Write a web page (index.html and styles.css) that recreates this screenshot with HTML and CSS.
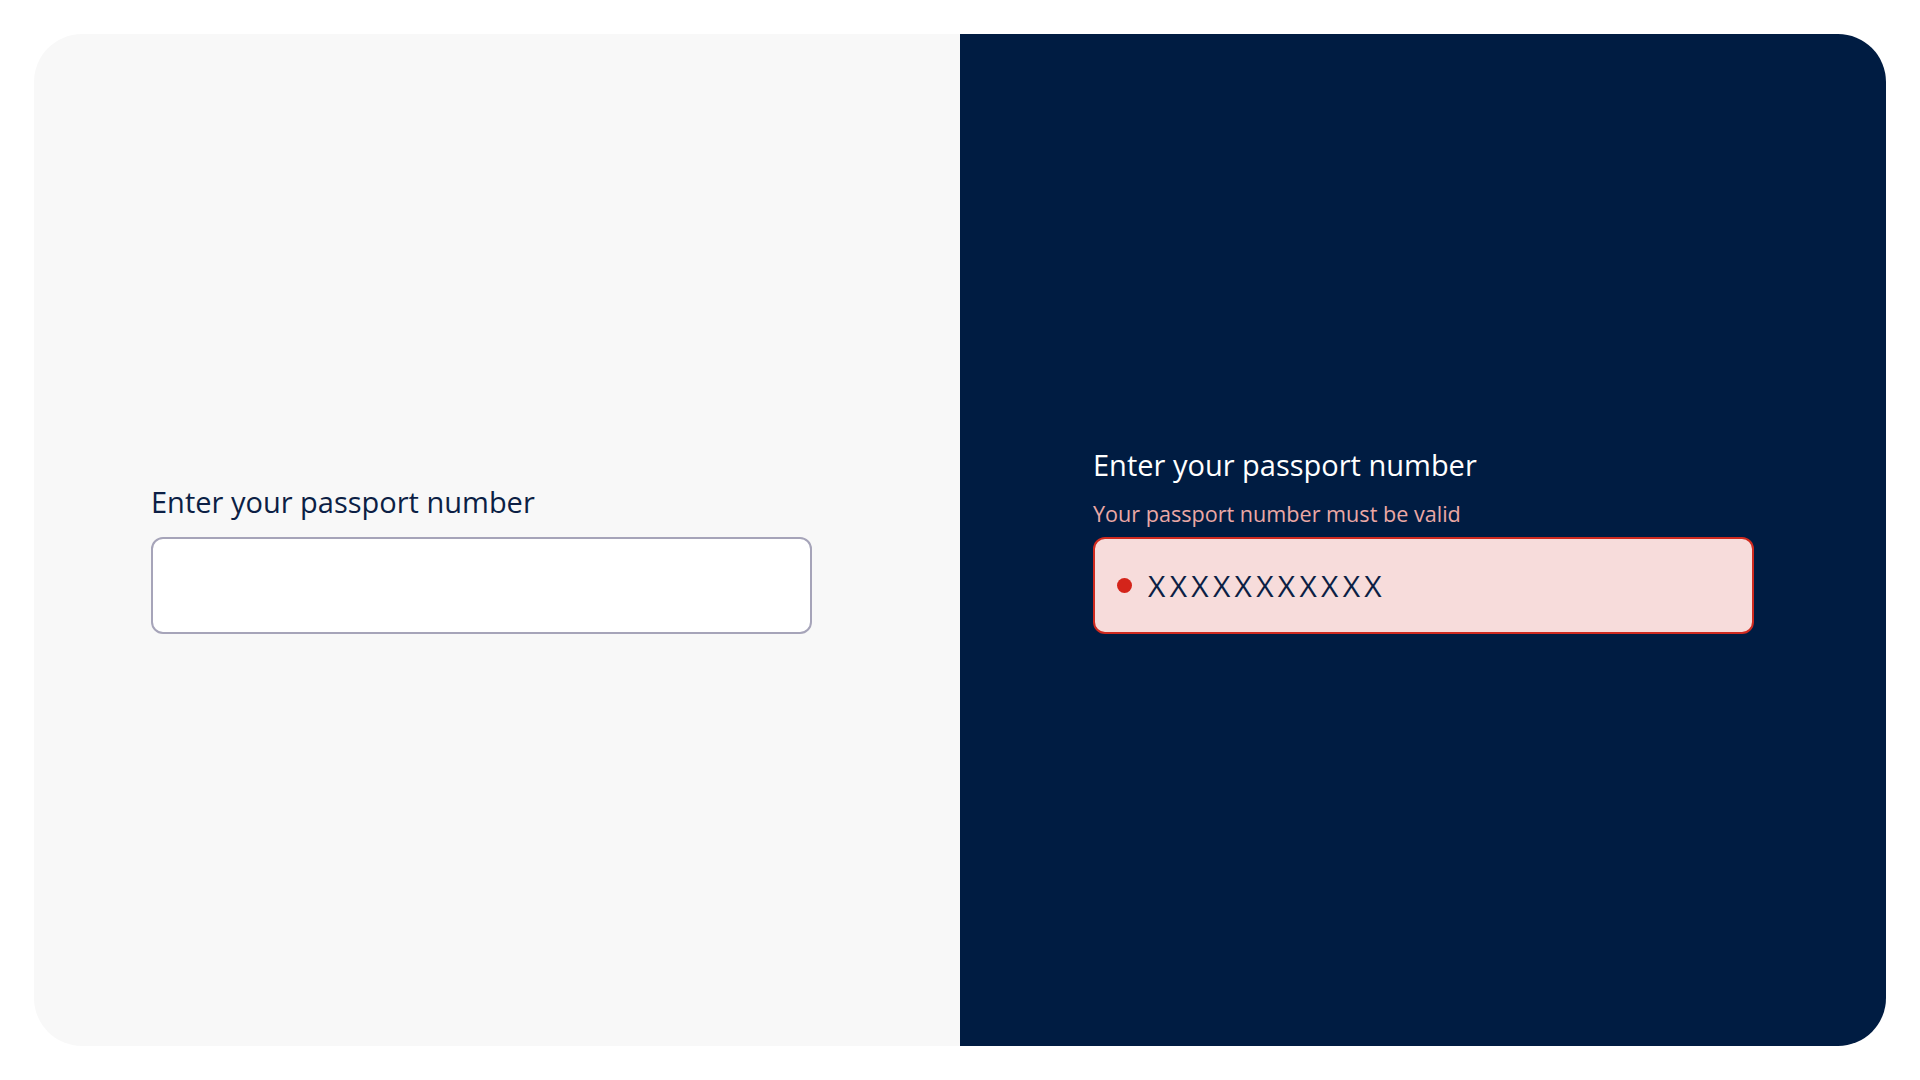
FILE: index.html
```html
<!DOCTYPE html>
<html lang="en">
<head>
    <meta charset="UTF-8">
    <meta name="viewport" content="width=device-width, initial-scale=1.0">
    <title>Passport number field</title>
    <link rel="stylesheet" href="styles.css">
</head>
<body>
    <main class="card">
        <!-- Default state -->
        <section class="panel panel-light">
            <div class="field">
                <label class="field-label" for="passportLight">Enter your passport number</label>
                <input class="field-input" type="text" id="passportLight">
            </div>
        </section>

        <!-- Error state on dark -->
        <section class="panel panel-dark">
            <div class="field">
                <label class="field-label" for="passportDark">Enter your passport number</label>
                <p class="field-error">Your passport number must be valid</p>
                <div class="field-input field-input-error">
                    <span class="error-dot"></span>
                    <input type="text" id="passportDark" value="XXXXXXXXXXX">
                </div>
            </div>
        </section>
    </main>
</body>
</html>
```

FILE: styles.css
```css
/* Reset and general styling */
* {
    margin: 0;
    padding: 0;
    box-sizing: border-box;
}

body {
    background-color: #fff;
    font-family: "Open Sans", "Noto Sans", sans-serif;
    padding: 34px;
}

/* Two panels side by side */
.card {
    display: grid;
    grid-template-columns: 1fr 1fr;
    height: 1012px;
    border-radius: 48px;
    overflow: hidden;
}

.panel {
    display: flex;
    flex-direction: column;
    justify-content: flex-end;
    padding-bottom: 412px;
}

.panel-light {
    background-color: #f8f8f8;
    padding-left: 117px;
}

.panel-dark {
    background-color: #001c42;
    padding-left: 133px;
}

.field {
    display: flex;
    flex-direction: column;
    width: 661px;
}

.field-label {
    font-size: 29px;
    line-height: 36px;
    color: #0c1f45;
    margin-bottom: 17px;
}

.panel-dark .field-label {
    color: #fff;
    margin-bottom: 16px;
}

.field-error {
    font-size: 21.6px;
    line-height: 30px;
    color: #eba8a5;
    margin-bottom: 8px;
}

.field-input {
    height: 97px;
    border: 2px solid #a6a4b9;
    border-radius: 12px;
    background-color: #fff;
    font-family: inherit;
    font-size: 30px;
    padding: 0 20px;
    outline: none;
}

.field-input-error {
    display: flex;
    align-items: center;
    gap: 16px;
    background-color: #f7dcdb;
    border-color: #cf2a1f;
    padding: 0 21px 0 22px;
}

.field-input-error input {
    flex: 1;
    border: none;
    background: transparent;
    font-family: inherit;
    font-size: 30px;
    letter-spacing: 4.3px;
    color: #0c1f45;
    outline: none;
}

.error-dot {
    width: 15px;
    height: 15px;
    border-radius: 50%;
    background-color: #d4241a;
    flex-shrink: 0;
}
```
